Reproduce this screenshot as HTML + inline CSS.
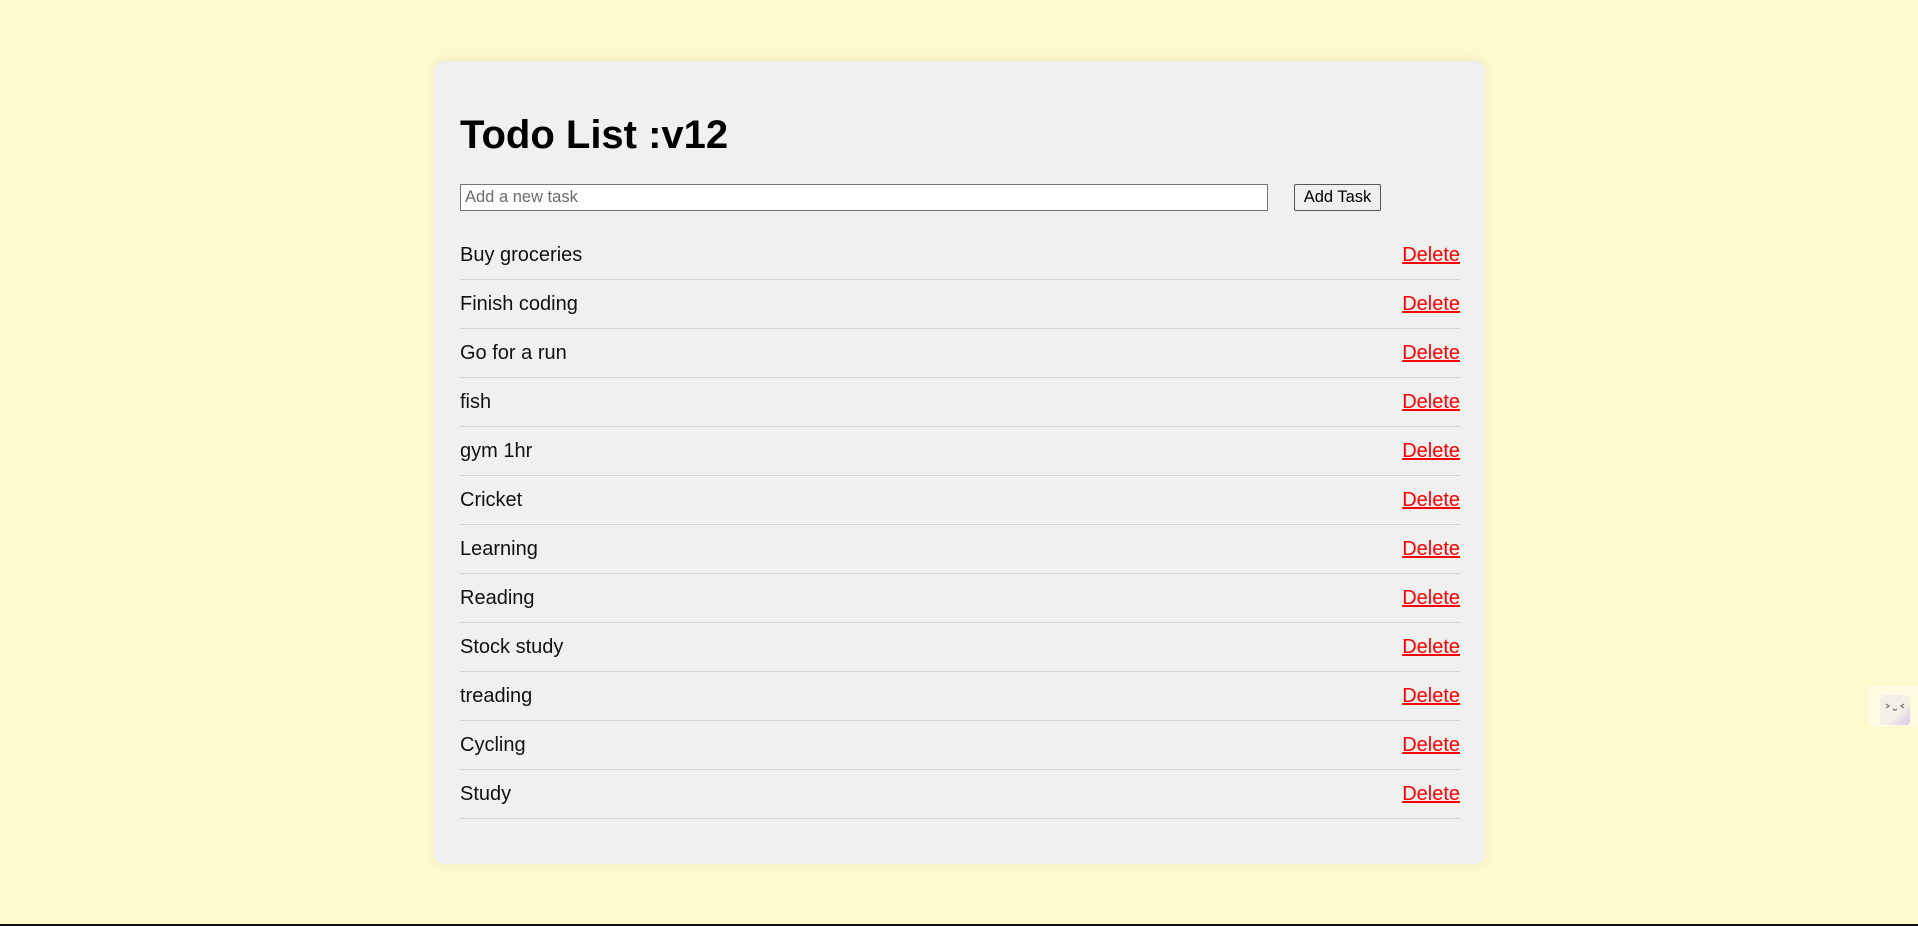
<!DOCTYPE html>
<html><head><meta charset="utf-8"><style>
html,body{margin:0;padding:0}
body{width:1918px;height:926px;background:#fffacd;position:relative;overflow:hidden;font-family:"Liberation Sans",Arial,sans-serif}
.card{position:absolute;left:434px;top:61px;width:1051px;height:803px;background:#f0f0f0;border-radius:10px;box-shadow:0 0 12px rgba(0,0,0,0.08)}
h1{position:absolute;left:460px;top:112px;margin:0;font-size:40px;font-weight:bold;line-height:46px;color:#000}
.inp{position:absolute;left:460px;top:184px;border:1px solid #767676;background:#fff;box-sizing:border-box;width:808px;height:27px;font-size:16.5px;color:#6b6b6b;padding-left:4px;line-height:24px}
.btn{position:absolute;left:1294px;top:184px;width:87px;height:27px;box-sizing:border-box;border:1px solid #555;border-radius:2px;background:#efefef;font-size:16.5px;text-align:center;line-height:24px;color:#000}
.row{position:absolute;left:460px;width:1000px;height:48px;border-bottom:1px solid #d4d4d4;font-size:20px;line-height:48px;color:#111}
.row span{position:absolute;right:0;top:0;color:red;text-decoration:underline}
.w{position:absolute;left:1867px;top:685px;width:60px;height:42px;background:#fffbe0;border-radius:8px;box-shadow:0 0 4px rgba(0,0,0,0.03)}
.wi{position:absolute;left:1880px;top:695px;width:30px;height:30px;border-radius:4px;background:linear-gradient(135deg,#f3f1e6 60%,#d9c6e6 100%)}
.bl{position:absolute;left:0;top:924px;width:1918px;height:2px;background:#111}
</style></head><body>
<div class="card"></div>
<h1>Todo List :v12</h1>
<div class="inp">Add a new task</div>
<div class="btn">Add Task</div>
<div class="row" style="top:231px">Buy groceries<span>Delete</span></div>
<div class="row" style="top:280px">Finish coding<span>Delete</span></div>
<div class="row" style="top:329px">Go for a run<span>Delete</span></div>
<div class="row" style="top:378px">fish<span>Delete</span></div>
<div class="row" style="top:427px">gym 1hr<span>Delete</span></div>
<div class="row" style="top:476px">Cricket<span>Delete</span></div>
<div class="row" style="top:525px">Learning<span>Delete</span></div>
<div class="row" style="top:574px">Reading<span>Delete</span></div>
<div class="row" style="top:623px">Stock study<span>Delete</span></div>
<div class="row" style="top:672px">treading<span>Delete</span></div>
<div class="row" style="top:721px">Cycling<span>Delete</span></div>
<div class="row" style="top:770px">Study<span>Delete</span></div>
<div class="w"></div>
<div class="wi"><svg width="30" height="30" viewBox="0 0 30 30"><path d="M6 9l3 2-3 2M24 9l-3 2 3 2M13 14q2 2 4 0" fill="none" stroke="#7a7a6a" stroke-width="1.3"/></svg></div>
<div class="bl"></div>
</body></html>
